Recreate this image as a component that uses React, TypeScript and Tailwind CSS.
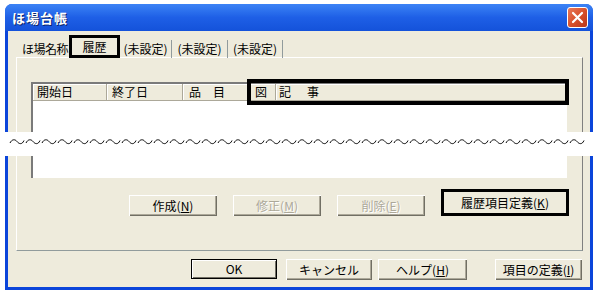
import type { ReactNode } from "react";

const beige = "bg-[#EEEBDC]";

function Btn({
  w,
  children,
  disabled,
  kind = "normal",
}: {
  w: string;
  children: ReactNode;
  disabled?: boolean;
  kind?: "normal" | "default" | "marked";
}) {
  let frame =
    "h-[21px] shadow-[inset_1px_1px_0_#fff,inset_-1px_-1px_0_#716F64,inset_-2px_-2px_0_#ACA899]";
  if (kind === "default")
    frame =
      "h-[20px] border border-black shadow-[inset_1px_1px_0_#fff,inset_-1px_-1px_0_#716F64]";
  if (kind === "marked") frame = "h-[27px] border-[3px] border-black";
  return (
    <div
      className={`${w} ${frame} ${beige} flex items-center justify-center whitespace-nowrap text-[12px] leading-none ${
        disabled ? "text-[#ACA899] [text-shadow:1px_1px_0_#fff]" : "text-black"
      }`}
    >
      {children}
    </div>
  );
}

function Wave() {
  // row of small tildes, one every 16px
  const n = 36;
  const d = Array.from({ length: n })
    .map((_, i) => {
      const x = 10 + i * 16;
      return `M${x},11 c2,-4 5,-4 7,-1.5 s5,3.5 7,-1`;
    })
    .join(" ");
  return (
    <svg width="609" height="24" className="block">
      <path d={d} fill="none" stroke="#000" strokeWidth="1" />
    </svg>
  );
}

export default function App() {
  return (
    <div className="relative w-[609px] h-[292px] bg-white pt-[4px] pl-[5px] font-['Noto_Sans_CJK_JP',sans-serif] overflow-hidden">
      {/* window */}
      <div className="w-[588px] h-[286px] rounded-t-[7px] bg-[#0B45DA] flex flex-col px-[3px] pb-[3px]">
        {/* title bar */}
        <div className="h-[27px] -mx-[3px] px-[7px] rounded-t-[7px] bg-gradient-to-b from-[#3C83F5] via-[#1E5FE6] to-[#1452DA] flex items-center justify-between">
          <span className="text-white font-bold text-[13px] leading-none tracking-[1px] whitespace-nowrap [text-shadow:1px_1px_0_#0A246A]">
            ほ場台帳
          </span>
          <div className="w-[21px] h-[21px] -mr-[2px] rounded-[3px] border border-white bg-gradient-to-br from-[#E8795A] via-[#D9512C] to-[#B8361A] flex items-center justify-center">
            <svg width="13" height="13" viewBox="0 0 13 13">
              <path d="M2,2 L11,11 M11,2 L2,11" stroke="#fff" strokeWidth="2.2" strokeLinecap="round" />
            </svg>
          </div>
        </div>

        {/* body */}
        <div className={`flex-1 ${beige} flex flex-col text-[12px] leading-none text-black whitespace-nowrap`}>
          {/* tabs */}
          <div className="mt-[4px] ml-[8px] h-[23px] flex items-end relative z-10">
            <div className="w-[53px] h-[18px] flex items-center pl-[6px] tracking-[-0.5px]">ほ場名称</div>
            <div className={`w-[51px] h-[23px] border-[3px] border-black ${beige} flex items-center justify-center`}>
              履歴
            </div>
            <div className="w-[52px] h-[18px] flex items-center justify-center border-r border-[#919B9C]">
              (未設定)
            </div>
            <div className="w-[56px] h-[18px] flex items-center justify-center border-r border-[#919B9C]">
              (未設定)
            </div>
            <div className="w-[55px] h-[18px] flex items-center justify-center border-r border-[#919B9C]">
              (未設定)
            </div>
          </div>

          {/* tab panel */}
          <div className="-mt-px ml-[8px] w-[567px] h-[194px] border-l border-t border-white border-r border-b border-r-[#808080] border-b-[#919B9C] flex flex-col">
            {/* list view */}
            <div className="relative mt-[24px] ml-[14px] w-[536px] h-[96px] bg-white border-l-2 border-t-2 border-l-[#7A7A7A] border-t-[#7A7A7A]">
              <div className={`flex h-[17px] ${beige} border-b border-[#ACA899]`}>
                <div className="w-[74px] pl-[4px] flex items-center border-r border-[#ACA899] shadow-[inset_1px_1px_0_#fff]">
                  開始日
                </div>
                <div className="w-[76px] pl-[5px] flex items-center border-r border-[#ACA899] shadow-[inset_1px_1px_0_#fff]">
                  終了日
                </div>
                <div className="w-[65px] pl-[6px] flex items-center border-r border-[#ACA899] shadow-[inset_1px_1px_0_#fff]">
                  品　目
                </div>
                <div className="w-[28px] pl-[7px] flex items-center border-r border-[#ACA899] shadow-[inset_1px_1px_0_#fff]">
                  図
                </div>
                <div className="flex-1 pl-[3px] flex items-center tracking-[2px] shadow-[inset_1px_1px_0_#fff]">
                  記　事
                </div>
              </div>
              {/* highlight frame */}
              <div className="absolute left-[214px] -top-[5px] w-[322px] h-[26px] border-[4px] border-black pointer-events-none" />
            </div>

            {/* panel buttons */}
            <div className="mt-[11px] ml-[112px] flex items-end gap-[16px]">
              <Btn w="w-[88px]">
                作成(<u>N</u>)
              </Btn>
              <Btn w="w-[88px]" disabled>
                修正(<u>M</u>)
              </Btn>
              <Btn w="w-[88px]" disabled>
                削除(<u>E</u>)
              </Btn>
              <Btn w="w-[128px]" kind="marked">
                履歴項目定義(<u>K</u>)
              </Btn>
            </div>
          </div>

          {/* dialog buttons */}
          <div className="mt-[8px] ml-[183px] flex items-start">
            <Btn w="w-[86px]" kind="default">
              OK
            </Btn>
            <div className="w-[9px]" />
            <Btn w="w-[86px]">キャンセル</Btn>
            <div className="w-[6px]" />
            <Btn w="w-[89px]">
              ヘルプ(<u>H</u>)
            </Btn>
            <div className="w-[28px]" />
            <Btn w="w-[87px]">
              項目の定義(<u>I</u>)
            </Btn>
          </div>
        </div>
      </div>

      {/* break band laid over the window */}
      <div className="absolute left-0 top-[132px] w-[609px] h-[24px] bg-white">
        <Wave />
      </div>
    </div>
  );
}
